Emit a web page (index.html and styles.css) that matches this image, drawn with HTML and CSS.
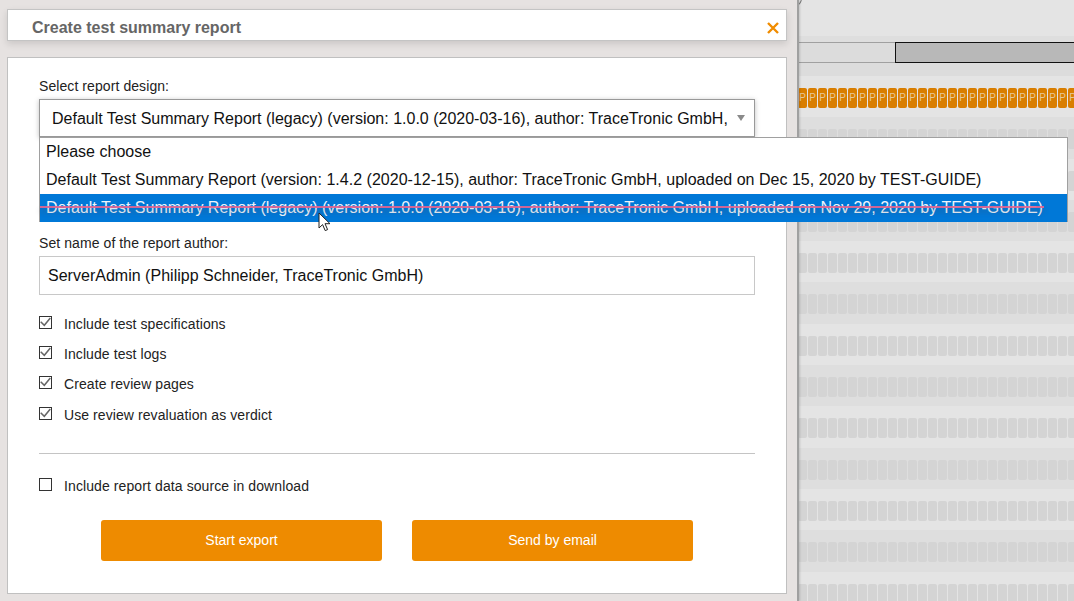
FILE: index.html
```html
<!DOCTYPE html>
<html lang="en">
<head>
<meta charset="utf-8">
<title>Create test summary report</title>
<link rel="stylesheet" href="styles.css">
</head>
<body>
<div class="page">
  <aside class="drawer">
    <header class="title-card">
      <h1 class="title">Create test summary report</h1>
      <svg class="close" width="12" height="12" viewBox="0 0 12 12"><path d="M1 1l10 10M11 1L1 11" stroke="#f08c00" stroke-width="2.4" fill="none"/></svg>
    </header>
    <main class="form-card">
      <div class="label first-label">Select report design:</div>
      <div class="select">
        <span class="select-text">Default Test Summary Report (legacy) (version: 1.0.0 (2020-03-16), author: TraceTronic GmbH,</span>
        <span class="select-arrow"></span>
      </div>
      <ul class="menu">
        <li class="option">Please choose</li>
        <li class="option">Default Test Summary Report (version: 1.4.2 (2020-12-15), author: TraceTronic GmbH, uploaded on Dec 15, 2020 by TEST-GUIDE)</li>
        <li class="option active">Default Test Summary Report (legacy) (version: 1.0.0 (2020-03-16), author: TraceTronic GmbH, uploaded on Nov 29, 2020 by TEST-GUIDE)</li>
      </ul>
      <div class="strike"></div>
      <svg class="cursor" width="14" height="20" viewBox="0 0 14 20"><path d="M1 1v15l3.6-3.4 2.6 6 2.4-1-2.6-5.9H12z" fill="#fff" stroke="#222" stroke-width="1"/></svg>
      <div class="label author-label">Set name of the report author:</div>
      <div class="input">ServerAdmin (Philipp Schneider, TraceTronic GmbH)</div>
      <div class="checks">
        <label class="check"><span class="box"><svg width="11" height="11" viewBox="0 0 11 11"><path d="M.7 4.7l3.6 3.6 6-7.3" stroke="#666" stroke-width="1.5" fill="none"/></svg></span>Include test specifications</label>
        <label class="check"><span class="box"><svg width="11" height="11" viewBox="0 0 11 11"><path d="M.7 4.7l3.6 3.6 6-7.3" stroke="#666" stroke-width="1.5" fill="none"/></svg></span>Include test logs</label>
        <label class="check"><span class="box"><svg width="11" height="11" viewBox="0 0 11 11"><path d="M.7 4.7l3.6 3.6 6-7.3" stroke="#666" stroke-width="1.5" fill="none"/></svg></span>Create review pages</label>
        <label class="check"><span class="box"><svg width="11" height="11" viewBox="0 0 11 11"><path d="M.7 4.7l3.6 3.6 6-7.3" stroke="#666" stroke-width="1.5" fill="none"/></svg></span>Use review revaluation as verdict</label>
      </div>
      <hr class="rule">
      <label class="check source"><span class="box"></span><span class="source-text">Include report data source in download</span></label>
      <div class="actions">
        <button class="btn">Start export</button>
        <button class="btn">Send by email</button>
      </div>
    </main>
  </aside>
  <section class="timeline">
    <div class="tl-top"><span class="tl-arc"></span></div>
    <div class="tl-gap"></div>
    <div class="tl-ruler"><div class="tl-range"></div></div>
    <div class="tl-gap2"></div>
    <div class="band light"><div class="pills orange">
      <span>P</span><span>P</span><span>P</span><span>P</span><span>P</span><span>P</span><span>P</span><span>P</span><span>P</span><span>P</span><span>P</span><span>P</span><span>P</span><span>P</span><span>P</span><span>P</span><span>P</span><span>P</span><span>P</span><span>P</span><span>P</span><span>P</span><span>P</span><span>P</span><span>P</span><span>P</span><span>P</span><span>P</span>
    </div></div>
    <div class="band"><div class="pills grey"></div></div>
    <div class="band light"><div class="pills grey"></div></div>
    <div class="band"><div class="pills grey"></div></div>
    <div class="band light"><div class="pills grey"></div></div>
    <div class="band"><div class="pills grey"></div></div>
    <div class="band light"><div class="pills grey"></div></div>
    <div class="band"><div class="pills grey"></div></div>
    <div class="band light"><div class="pills grey"></div></div>
    <div class="band"><div class="pills grey"></div></div>
    <div class="band light"><div class="pills grey"></div></div>
    <div class="band"><div class="pills grey"></div></div>
    <div class="band light"><div class="pills grey"></div></div>
  </section>
</div>
</body>
</html>
```
FILE: styles.css
```css
* { box-sizing: border-box; }
html, body { margin: 0; height: 100%; overflow: hidden; }
body { font-family: "Liberation Sans", Arial, sans-serif; color: #1a1a1a; }
.page { display: flex; width: 1074px; height: 601px; overflow: hidden; position: relative; }

.drawer {
  width: 799px; flex: none; height: 601px; background: #e6e2e1;
  padding: 9px 10px 0 7px;
  border-right: 2px solid #a0a0a0;
  box-shadow: 1px 0 2px rgba(0,0,0,.15);
  position: relative; z-index: 2;
}
.title-card {
  height: 32px; background: #fff; border: 1px solid #c4c4c4;
  box-shadow: 0 3px 7px rgba(0,0,0,.12);
  display: flex; align-items: center; justify-content: space-between;
  padding: 5px 7px 0 24px;
}
.title { margin: 0; font-size: 16px; font-weight: bold; color: #666; }
.form-card {
  position: relative;
  margin-top: 16px; height: 537px; background: #fff; border: 1px solid #c0c0c0;
  padding: 20px 31px 0 31px;
}
.label { font-size: 14px; line-height: 16px; color: #222; letter-spacing: .08px; }
.select {
  margin-top: 5px; height: 38px; border: 1px solid #999; background: #fff;
  box-shadow: 0 1px 5px rgba(0,0,0,.25);
  display: flex; align-items: center; justify-content: space-between;
  padding: 1px 9px 0 12px; font-size: 16px; color: #111; white-space: nowrap;
}
.select-arrow { width: 0; height: 0; border: 4px solid transparent; border-top: 6px solid #8a8a8a; border-bottom: 0; margin-top: -1px; }
.menu {
  position: absolute; left: 31px; top: 79px; width: 1029px; height: 85px; margin: 0; padding: 0;
  list-style: none; background: #fff; border: 1px solid #a0a0a0; z-index: 3;
}
.option { height: 28px; line-height: 27px; padding-left: 6px; font-size: 16px; color: #111; white-space: nowrap; letter-spacing: .016px; }
.active { background: #0078d7; color: #eef4fb; }
.strike {
  position: absolute; left: 32px; top: 148px; width: 1004px; height: 2px; z-index: 4;
  background: rgba(222,100,145,.92); box-shadow: 0 4px 5px rgba(70,70,90,.4);
}
.cursor { position: absolute; left: 310px; top: 154px; z-index: 5; }
.author-label { margin-top: 98px; }
.input {
  margin-top: 5px; height: 39px; border: 1px solid #c8c8c8;
  padding: 0 8px; font-size: 16px; line-height: 37px; color: #111; letter-spacing: .016px;
}
.checks { margin-top: 21px; }
.check { display: flex; align-items: center; height: 16px; font-size: 14px; color: #222; margin-bottom: 14px; letter-spacing: .08px; }
.check:nth-child(3) { margin-bottom: 15px; }
.box {
  width: 13px; height: 13px; border: 1px solid #333; margin-right: 12px; flex: none; align-self: flex-start;
  display: flex; align-items: flex-start; justify-content: center; background: #fff;
}
.rule { border: 0; height: 1px; background: #c4c4c4; margin: 30px 0 0; }
.source { margin-top: 24px; margin-bottom: 0; }
.source-text { letter-spacing: .1px; }
.actions { display: flex; gap: 30px; margin-top: 26px; padding-left: 62px; }
.btn {
  width: 281px; height: 41px; border: 0; border-radius: 3px; background: #ee8b00; padding: 0 0 2px;
  color: #fff; font: 14px "Liberation Sans", Arial, sans-serif;
}

.timeline { flex: 1; min-width: 0; height: 601px; background: #dedede; }
.tl-top { height: 36px; background: #e4e4e4; position: relative; overflow: hidden; }
.tl-arc { position: absolute; left: -10px; top: -10px; width: 13px; height: 16px; border: 1px solid #777; border-radius: 50%; }
.tl-gap { height: 6px; background: #dedede; }
.tl-ruler { height: 21px; background: #dcdcdc; border-top: 1px solid #a0a0a0; border-bottom: 1px solid #a0a0a0; padding-left: 96px; }
.tl-range { height: 21px; margin-top: -1px; background: #b8b8b8; border: 1px solid #111; border-right: 0; }
.tl-gap2 { height: 13px; background: #dcdcdc; }
.band { height: 41.3px; background: #dedede; padding-top: 12px; overflow: hidden; }
.light { background: #e4e4e4; }
.pills { height: 20px; margin-left: -1px; }
.grey {
  background-image: url("data:image/svg+xml,%3Csvg xmlns='http://www.w3.org/2000/svg' width='10' height='20'%3E%3Crect width='9' height='20' rx='2' fill='%23d4d4d4'/%3E%3C/svg%3E");
  background-repeat: repeat-x;
  background-position: 0 0;
}
.orange { display: flex; gap: 1px; white-space: nowrap; }
.orange span {
  flex: none; width: 9px; height: 20px; border-radius: 2px; background: #d97e00;
  color: #e6c89a; font-size: 10px; line-height: 20px; text-align: center;
}
```
